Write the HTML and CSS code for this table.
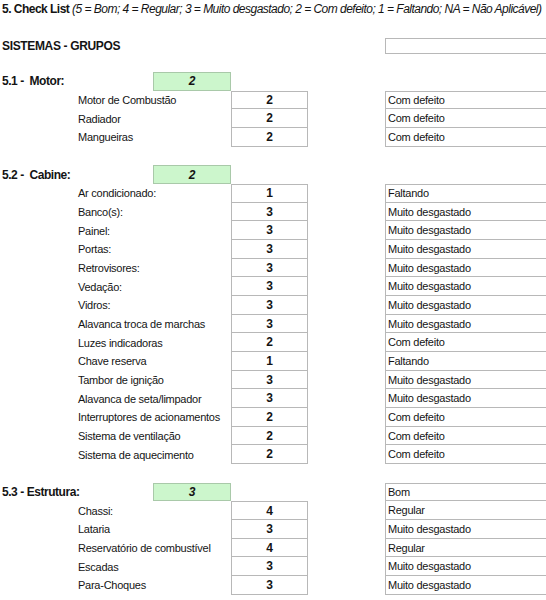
FILE: index.html
```html
<!DOCTYPE html>
<html lang="pt">
<head>
<meta charset="utf-8">
<link rel="stylesheet" href="styles.css">
</head>
<body>
<div class="sheet">
  <div class="title"><b>5. Check List</b> <i>(5 = Bom; 4 = Regular; 3 = Muito desgastado; 2 = Com defeito; 1 = Faltando; NA = Não Aplicável)</i></div>
  <div class="systems"><span class="systems-label">SISTEMAS - GRUPOS</span><span class="systems-box"></span></div>

  <section class="group">
    <div class="g-label">5.1 -&nbsp; Motor:</div><div class="g-score">2</div>
    <div class="item">Motor de Combustão</div><div class="val first">2</div><div class="desc first">Com defeito</div>
    <div class="item">Radiador</div><div class="val">2</div><div class="desc">Com defeito</div>
    <div class="item">Mangueiras</div><div class="val">2</div><div class="desc">Com defeito</div>
  </section>

  <section class="group">
    <div class="g-label">5.2 -&nbsp; Cabine:</div><div class="g-score">2</div>
    <div class="item">Ar condicionado:</div><div class="val first">1</div><div class="desc first">Faltando</div>
    <div class="item">Banco(s):</div><div class="val">3</div><div class="desc">Muito desgastado</div>
    <div class="item">Painel:</div><div class="val">3</div><div class="desc">Muito desgastado</div>
    <div class="item">Portas:</div><div class="val">3</div><div class="desc">Muito desgastado</div>
    <div class="item">Retrovisores:</div><div class="val">3</div><div class="desc">Muito desgastado</div>
    <div class="item">Vedação:</div><div class="val">3</div><div class="desc">Muito desgastado</div>
    <div class="item">Vidros:</div><div class="val">3</div><div class="desc">Muito desgastado</div>
    <div class="item">Alavanca troca de marchas</div><div class="val">3</div><div class="desc">Muito desgastado</div>
    <div class="item">Luzes indicadoras</div><div class="val">2</div><div class="desc">Com defeito</div>
    <div class="item">Chave reserva</div><div class="val">1</div><div class="desc">Faltando</div>
    <div class="item">Tambor de ignição</div><div class="val">3</div><div class="desc">Muito desgastado</div>
    <div class="item">Alavanca de seta/limpador</div><div class="val">3</div><div class="desc">Muito desgastado</div>
    <div class="item">Interruptores de acionamentos</div><div class="val">2</div><div class="desc">Com defeito</div>
    <div class="item">Sistema de ventilação</div><div class="val">2</div><div class="desc">Com defeito</div>
    <div class="item">Sistema de aquecimento</div><div class="val">2</div><div class="desc">Com defeito</div>
  </section>

  <section class="group">
    <div class="g-label">5.3 - Estrutura:</div><div class="g-score">3</div><div class="desc first head">Bom</div>
    <div class="item">Chassi:</div><div class="val first">4</div><div class="desc">Regular</div>
    <div class="item">Lataria</div><div class="val">3</div><div class="desc">Muito desgastado</div>
    <div class="item">Reservatório de combustível</div><div class="val">4</div><div class="desc">Regular</div>
    <div class="item">Escadas</div><div class="val">3</div><div class="desc">Muito desgastado</div>
    <div class="item">Para-Choques</div><div class="val">3</div><div class="desc">Muito desgastado</div>
  </section>
</div>
</body>
</html>
```
FILE: styles.css
```css
html, body {
  margin: 0;
  padding: 0;
  background: #ffffff;
}
body {
  width: 546px;
  height: 600px;
  overflow: hidden;
  font-family: "Liberation Sans", Arial, sans-serif;
  font-size: 11px;
  color: #141414;
}
.sheet {
  display: flex;
  flex-direction: column;
}
.title {
  height: 18px;
  line-height: 18px;
  padding-left: 2px;
  font-size: 12px;
  white-space: nowrap;
  letter-spacing: -0.52px;
}
.title i {
  font-weight: normal;
}
.systems {
  margin-top: 20px;
  height: 16px;
  display: flex;
  align-items: center;
}
.systems-label {
  flex: none;
  width: 383px;
  padding-left: 2px;
  font-weight: bold;
  font-size: 12px;
  letter-spacing: -0.35px;
}
.systems-box {
  box-sizing: border-box;
  width: 170px;
  height: 16px;
  border: 1px solid #b8b8b8;
  flex: none;
}
.group {
  margin-top: 18px;
  display: grid;
  grid-template-columns: 153px 78px 77px 77px 170px;
  grid-auto-rows: 18.68px;
}
.group + .group {
  margin-top: 18.68px;
}
.group > div {
  box-sizing: border-box;
  display: flex;
  align-items: center;
  white-space: nowrap;
}
.g-label {
  grid-column: 1;
  padding-left: 2px;
  font-weight: bold;
  font-size: 12px;
  letter-spacing: -0.45px;
}
.g-score {
  grid-column: 2;
  justify-content: center;
  background: #ccf6cc;
  border: 1px solid #a9c9a9;
  font-weight: bold;
  font-style: italic;
  font-size: 12px;
}
.item {
  grid-column: 1 / 3;
  padding-left: 78px;
  letter-spacing: -0.25px;
}
.val {
  grid-column: 3;
  justify-content: center;
  font-weight: bold;
  font-size: 12px;
  border: 1px solid #b8b8b8;
  border-top: none;
}
.desc {
  grid-column: 5;
  padding-left: 2px;
  letter-spacing: -0.25px;
  border: 1px solid #b8b8b8;
  border-top: none;
}
.val.first,
.desc.first {
  border-top: 1px solid #b8b8b8;
}
```
